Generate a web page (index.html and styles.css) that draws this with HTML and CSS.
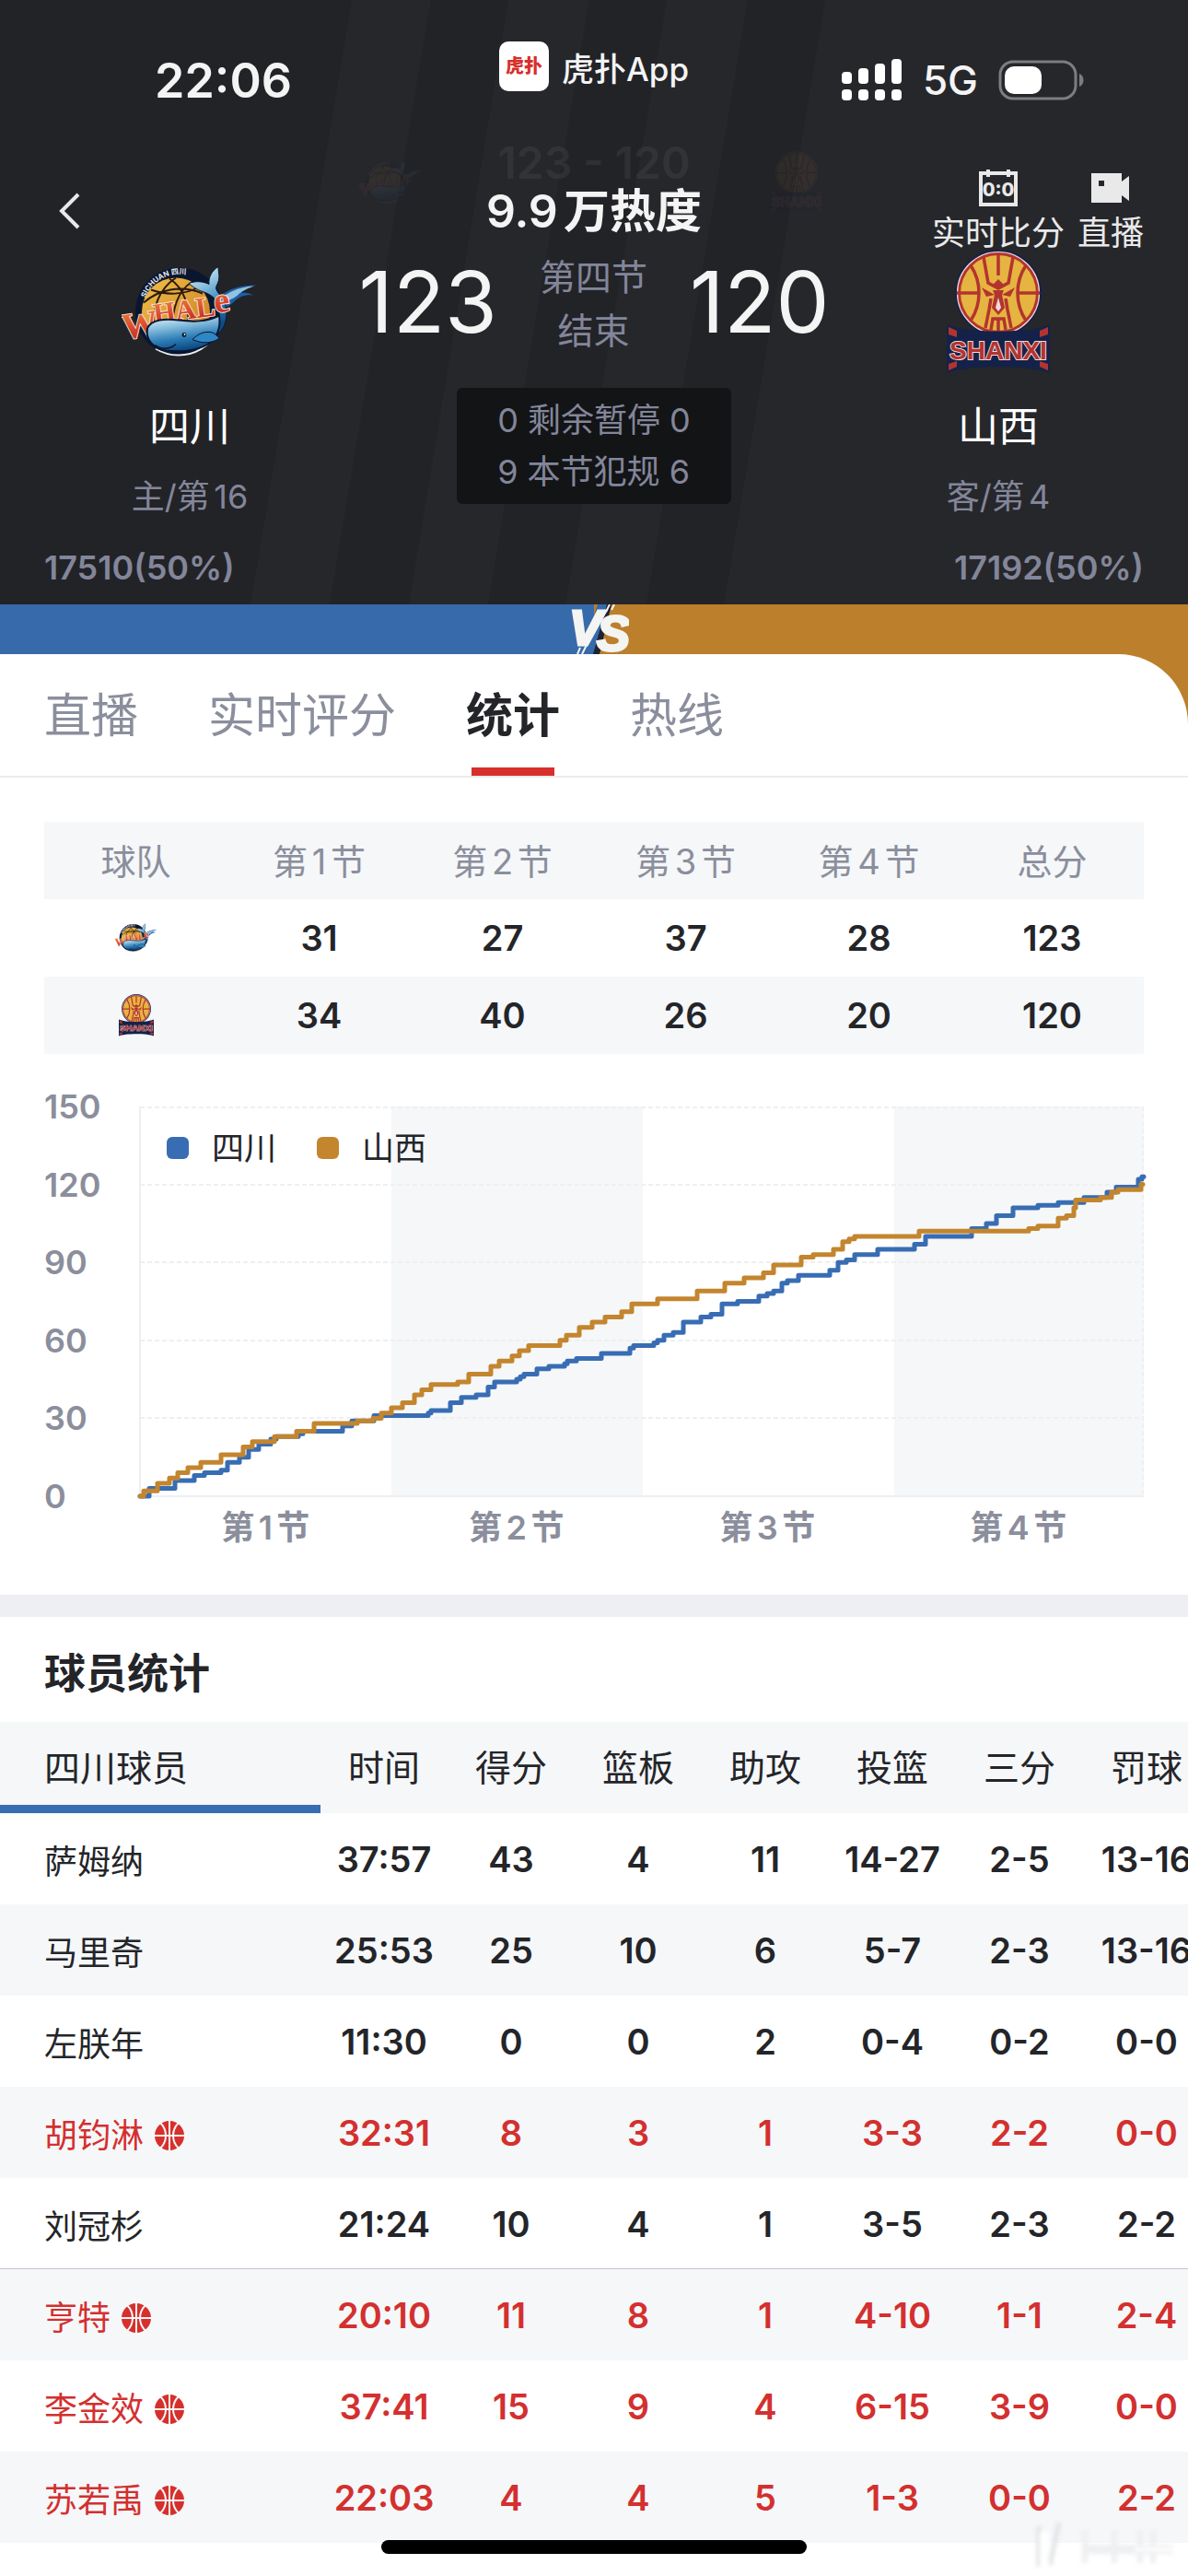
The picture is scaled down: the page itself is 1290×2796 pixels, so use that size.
FILE: index.html
```html
<!DOCTYPE html>
<html lang="zh-CN">
<head>
    <meta charset="UTF-8">
    <meta name="viewport" content="width=device-width, initial-scale=1.0">
    <title>四川 123 - 120 山西</title>
    <link rel="stylesheet" href="styles.css">
</head>
<body>
    <!-- shared icons -->
    <svg class="defs" aria-hidden="true">
        <defs>
            <linearGradient id="whaleBody" x1="0" y1="0" x2="0.3" y2="1">
                <stop offset="0" stop-color="#f2f8fb"/>
                <stop offset="0.35" stop-color="#8fc3e0"/>
                <stop offset="0.7" stop-color="#2f7fb8"/>
                <stop offset="1" stop-color="#0d4c86"/>
            </linearGradient>
            <linearGradient id="whaleWord" x1="0" y1="0" x2="0" y2="1">
                <stop offset="0" stop-color="#f08a3c"/>
                <stop offset="0.6" stop-color="#d8432a"/>
                <stop offset="1" stop-color="#b3241f"/>
            </linearGradient>
            <linearGradient id="goldBall" x1="0" y1="0" x2="1" y2="1">
                <stop offset="0" stop-color="#f0c04a"/>
                <stop offset="1" stop-color="#c87a1c"/>
            </linearGradient>
        </defs>
        <symbol id="logo-sichuan" viewBox="10 9 148 98">
            <path d="M110 47c10-10 22-18 47-18-10 2-14 5-17 8 6 0 10 1 13 3-10-1-16 2-22 8-6 5-12 7-20 7z" fill="#1d5ea6"/>
            <path d="M118 43c8-6 18-12 36-13-9 3-14 6-18 10-5 4-10 6-16 7z" fill="#8fc3e0"/>
            <circle cx="73" cy="58" r="48" fill="#0a1630"/>
            <path d="M47 98a48 48 0 0 0 73-42" fill="none" stroke="#e8ecef" stroke-width="2"/>
            <path id="ringText" d="M36 43A40 40 0 0 1 100 27" fill="none"/>
            <text class="ring-text"><textPath href="#ringText">SICHUAN 四川</textPath></text>
            <circle cx="69" cy="58" r="37" fill="url(#goldBall)"/>
            <path d="M34 48c16-14 40-20 64-10M69 21c-18 12-26 32-24 58M62 22c16 10 22 30 20 50M86 26c-14 8-22 30-20 50M42 34c16 6 36 6 52-3" fill="none" stroke="#2a1a10" stroke-width="2"/>
            <path d="M115 65c4-14-2-24-17-29-6-2-12-6-15-9 8-3 16-2 22 1-1-7 3-15 10-19 0 8 3 12-2 21-3 7 12 12 11 32-1 12-6 18-12 22z" fill="url(#whaleBody)" stroke="#0a1630" stroke-width="1"/>
            <g class="whale-word">
                <text class="whale-w" transform="rotate(-8 12 88)" x="12" y="88">W</text>
                <text transform="rotate(-8 45 71)" x="46" y="71">HAL</text>
                <text class="whale-e" transform="rotate(-8 112 60)" x="112" y="59">e</text>
            </g>
            <path d="M38 76c4-10 20-11 34-9 16 2 30 2 44-5 2 12-2 25-12 31-12 7-30 9-46 7-14-2-22-12-20-24z" fill="url(#whaleBody)" stroke="#0a1630" stroke-width="2"/>
            <path d="M87 88c6-6 12-9 20-8 4 1 7 4 9 7-8 5-18 6-29 1z" fill="#2f86c4" stroke="#0a1630" stroke-width="1"/>
            <path d="M46 94c6 4 12 5 19 2l4-3" fill="none" stroke="#0a1630" stroke-width="1.5"/>
            <circle cx="78" cy="83" r="2.4" fill="#0a1630"/>
            <circle cx="78.5" cy="82.5" r="0.9" fill="#fff"/>
        </symbol>
        <symbol id="logo-shanxi" viewBox="0 0 112 133">
            <circle cx="56" cy="46" r="47" fill="#14224a"/>
            <circle cx="56" cy="46" r="44.5" fill="#b23430" stroke="#f3d9d6" stroke-width="1.2"/>
            <circle cx="56" cy="46" r="41" fill="#e6b440"/>
            <g fill="none" stroke="#b23430" stroke-width="3.5">
                <path d="M11 46h23M78 46h23M26 16c12 18 12 42 0 60M86 16c-12 18-12 42 0 60"/>
                <path d="M40 7l5 28 11 6 11-6 5-28M56 5v22M48 86l2-12h12l2 12M56 74v16"/>
                <path d="M48 52l-2 12-4 20M64 52l2 12 4 20"/>
            </g>
            <path d="M38 40l14 8-9 2zM74 40l-14 8 9 2zM50 43h12l-2 5 3 14-7 8-7-8 3-14zM56 31l6 6-6 4-6-4z" fill="#b23430"/>
            <path d="M56 51l3 11-3 4-3-4z" fill="#f3d9d6"/>
            <path d="M0 80c18 10 94 10 112 0v53c-20-9-92-9-112 0z" fill="#14224a"/>
            <path d="M2 83l9 4v7l-9-3zM110 83l-9 4v7l9-3zM2 130l9-4v-6l-9 3zM110 130l-9-4v-6l9 3z" fill="#b23430"/>
            <text class="shanxi-word" x="56" y="118">SHANXI</text>
        </symbol>
        <symbol id="icon-ball" viewBox="0 0 32 32">
            <circle cx="16" cy="16" r="16" fill="#d7302c"/>
            <path d="M16 0v32M0 16h32M6 2c8 8 8 20 0 28M26 2c-8 8-8 20 0 28" fill="none" stroke="#f5f7f9" stroke-width="2"/>
        </symbol>
    </svg>

    <div class="app">
        <header class="header">
            <svg class="header-stripes" viewBox="0 0 1290 656" preserveAspectRatio="none" aria-hidden="true">
                <path d="M382 0h86L358 656h-86zM552 0h88L530 656h-86zM724 0h88L702 656h-88zM896 0h394v656H786z" fill="#26272b"/>
            </svg>

            <div class="mini-bar" aria-hidden="true">
                <svg class="mini-logo" viewBox="0 0 148 98"><use href="#logo-sichuan"/></svg>
                <span class="mini-score">123 - 120</span>
                <svg class="mini-logo" viewBox="0 0 112 133"><use href="#logo-shanxi"/></svg>
            </div>

            <div class="status-bar">
                <span class="clock">22:06</span>
                <span class="app-badge">
                    <span class="app-icon">虎扑</span>
                    <span>虎扑App</span>
                </span>
                <span class="status-icons">
                    <svg width="66" height="46" viewBox="0 0 66 46" fill="#fff">
                        <rect x="0" y="14" width="11" height="13" rx="4"/>
                        <rect x="18" y="10" width="11" height="17" rx="4"/>
                        <rect x="36" y="5" width="11" height="22" rx="4"/>
                        <rect x="54" y="0" width="11" height="27" rx="4"/>
                        <rect x="0" y="33" width="11" height="12" rx="4"/>
                        <rect x="18" y="33" width="11" height="12" rx="4"/>
                        <rect x="36" y="33" width="11" height="12" rx="4"/>
                        <rect x="54" y="33" width="11" height="12" rx="4"/>
                    </svg>
                    <span class="network">5G</span>
                    <svg width="94" height="44" viewBox="0 0 94 44">
                        <rect x="2" y="2" width="82" height="40" rx="14" fill="none" stroke="#7c7d80" stroke-width="3"/>
                        <rect x="7" y="7" width="40" height="30" rx="10" fill="#fff"/>
                        <path d="M88 15c6 2 6 12 0 14z" fill="#7c7d80"/>
                    </svg>
                </span>
            </div>

            <nav class="nav">
                <button class="back" aria-label="返回">
                    <svg width="24" height="40" viewBox="0 0 24 40"><path d="M21 2L3 20l18 18" fill="none" stroke="#e9e9ea" stroke-width="4"/></svg>
                </button>
                <h1 class="title">9.9万热度</h1>
                <div class="actions">
                    <button class="action">
                        <svg width="42" height="40" viewBox="0 0 42 40">
                            <path d="M2 4h38v34H2zM10 0v8M32 0v8" fill="none" stroke="#e9e9ea" stroke-width="4"/>
                            <text class="zero-text" x="21" y="29">0:0</text>
                        </svg>
                        实时比分
                    </button>
                    <button class="action">
                        <svg width="42" height="40" viewBox="0 0 42 40">
                            <path d="M0 4h33v9l8-6v27l-8-6v8H0zM8 12v6h6v-6z" fill="#e9e9ea" fill-rule="evenodd"/>
                        </svg>
                        直播
                    </button>
                </div>
            </nav>

            <section class="scoreboard">
                <div class="team">
                    <svg class="team-logo" width="148" height="98"><use href="#logo-sichuan"/></svg>
                    <span class="team-name">四川</span>
                    <span class="team-rank">主/第16</span>
                </div>
                <div class="middle">
                    <div class="score-line">
                        <span class="score">123</span>
                        <span class="period">第四节<br>结束</span>
                        <span class="score">120</span>
                    </div>
                    <div class="fouls">
                        <div>0 剩余暂停 0</div>
                        <div>9 本节犯规 6</div>
                    </div>
                </div>
                <div class="team">
                    <svg class="team-logo" width="112" height="133"><use href="#logo-shanxi"/></svg>
                    <span class="team-name">山西</span>
                    <span class="team-rank">客/第4</span>
                </div>
            </section>

            <div class="votes">
                <span>17510(50%)</span>
                <span>17192(50%)</span>
            </div>
        </header>

        <div class="vs-bar">
            <svg class="vs" width="68" height="54" viewBox="0 0 68 54">
                <path d="M34 0h12L32 54H16z" fill="#376aaa"/>
                <path d="M44 0h5L36 54h-7z" fill="#1d2330"/>
                <text class="vs-text" x="3" y="44">V</text>
                <text class="vs-text" x="33" y="50">S</text>
                <path d="M47 0l-4 8M52 0l-3 6M12 54l3-7M17 54l8-16" fill="none" stroke="#f4f4f2" stroke-width="2"/>
            </svg>
        </div>

        <div class="tabs-wrap">
            <nav class="tabs">
                <a class="tab" href="#live">直播</a>
                <a class="tab" href="#rating">实时评分</a>
                <a class="tab active" href="#stats">统计</a>
                <a class="tab" href="#hotline">热线</a>
            </nav>
        </div>

        <main class="content" id="stats">
            <table class="quarters">
                <thead>
                    <tr><th>球队</th><th>第1节</th><th>第2节</th><th>第3节</th><th>第4节</th><th>总分</th></tr>
                </thead>
                <tbody>
                    <tr>
                        <td><svg class="row-logo" width="46" height="32" role="img" aria-label="四川"><use href="#logo-sichuan"/></svg></td>
                        <td>31</td><td>27</td><td>37</td><td>28</td><td>123</td>
                    </tr>
                    <tr>
                        <td><svg class="row-logo" width="38" height="46" role="img" aria-label="山西"><use href="#logo-shanxi"/></svg></td>
                        <td>34</td><td>40</td><td>26</td><td>20</td><td>120</td>
                    </tr>
                </tbody>
            </table>

            <section class="chart">
                <div class="y-axis">
                    <span>150</span><span>120</span><span>90</span><span>60</span><span>30</span><span>0</span>
                </div>
                <div class="plot">
                    <svg class="plot-svg" viewBox="0 0 1090 423" preserveAspectRatio="none">
                        <path d="M273 0h273v423H273zM819 0h271v423H819z" fill="#f5f7f9"/>
                        <path d="M0 1h1090M0 85h1090M0 169h1090M0 254h1090M0 338h1090M1089 0v423" fill="none" stroke="#eeeff1" stroke-width="2" stroke-dasharray="5 3"/>
                        <path d="M0 0v423h1090" fill="none" stroke="#eeeff1" stroke-width="2"/>
                        <path class="line line-home" id="homeLine"/>
                        <path class="line line-away" id="awayLine"/>
                    </svg>
                    <div class="legend">
                        <span class="key home">四川</span>
                        <span class="key away">山西</span>
                    </div>
                </div>
                <div class="x-axis">
                    <span>第1节</span><span>第2节</span><span>第3节</span><span>第4节</span>
                </div>
            </section>

            <section class="players">
                <h2 class="players-title">球员统计</h2>
                <div class="players-scroll">
                    <table class="players-table">
                        <thead>
                            <tr><th class="name">四川球员</th><th>时间</th><th>得分</th><th>篮板</th><th>助攻</th><th>投篮</th><th>三分</th><th>罚球</th></tr>
                        </thead>
                        <tbody>
                            <tr><td class="name">萨姆纳</td><td>37:57</td><td>43</td><td>4</td><td>11</td><td>14-27</td><td>2-5</td><td>13-16</td></tr>
                            <tr><td class="name">马里奇</td><td>25:53</td><td>25</td><td>10</td><td>6</td><td>5-7</td><td>2-3</td><td>13-16</td></tr>
                            <tr><td class="name">左朕年</td><td>11:30</td><td>0</td><td>0</td><td>2</td><td>0-4</td><td>0-2</td><td>0-0</td></tr>
                            <tr class="on-court"><td class="name">胡钧淋<svg class="ball"><use href="#icon-ball"/></svg></td><td>32:31</td><td>8</td><td>3</td><td>1</td><td>3-3</td><td>2-2</td><td>0-0</td></tr>
                            <tr class="last-starter"><td class="name">刘冠杉</td><td>21:24</td><td>10</td><td>4</td><td>1</td><td>3-5</td><td>2-3</td><td>2-2</td></tr>
                            <tr class="on-court"><td class="name">亨特<svg class="ball"><use href="#icon-ball"/></svg></td><td>20:10</td><td>11</td><td>8</td><td>1</td><td>4-10</td><td>1-1</td><td>2-4</td></tr>
                            <tr class="on-court"><td class="name">李金效<svg class="ball"><use href="#icon-ball"/></svg></td><td>37:41</td><td>15</td><td>9</td><td>4</td><td>6-15</td><td>3-9</td><td>0-0</td></tr>
                            <tr class="on-court"><td class="name">苏若禹<svg class="ball"><use href="#icon-ball"/></svg></td><td>22:03</td><td>4</td><td>4</td><td>5</td><td>1-3</td><td>0-0</td><td>2-2</td></tr>
                        </tbody>
                    </table>
                </div>
            </section>
        </main>

        <svg class="corner-mark" viewBox="0 0 160 50" aria-hidden="true">
            <path d="M8 4v44M30 0L20 46" stroke="#e2e3e6" stroke-width="5"/>
            <path d="M14 10v38" stroke="#fff" stroke-width="10"/>
            <path d="M58 8v36M90 8v36M118 8v36M132 8v36" stroke="#eeeff1" stroke-width="6" fill="none"/>
            <path d="M60 29h94" stroke="#eeeff1" stroke-width="10"/>
            <path d="M112 29h42" stroke="#fff" stroke-width="4"/>
        </svg>
        <div class="home-indicator"></div>
    </div>

    <script>
        // [x, score] after every basket, x runs from 0 to 1090 over the four quarters
        const home = [
            [0, 0], [10, 3], [38, 6], [59, 8], [70, 9], [88, 10], [95, 13], [108, 15], [118, 18], [129, 20],
            [142, 22], [148, 23], [172, 24], [177, 25], [220, 27], [230, 29], [254, 31],
            [313, 32], [316, 33], [337, 36], [349, 38], [365, 39], [378, 42], [385, 44], [409, 45], [413, 46],
            [417, 47], [431, 49], [444, 50], [461, 51], [464, 52], [474, 53], [501, 55], [532, 57], [536, 58],
            [558, 59], [562, 60], [569, 62], [579, 63], [590, 67], [609, 69], [620, 70], [632, 74], [649, 75],
            [672, 77], [681, 78], [688, 79], [697, 82], [703, 83], [715, 85], [749, 87], [758, 90], [767, 91],
            [776, 93], [801, 95],
            [841, 97], [853, 100], [903, 103], [919, 105], [930, 108], [948, 111], [975, 112], [997, 113],
            [1025, 115], [1050, 117], [1060, 119], [1084, 122], [1088, 123]
        ];
        const away = [
            [0, 0], [4, 2], [19, 5], [32, 7], [41, 9], [52, 11], [66, 13], [88, 16], [112, 19], [122, 21],
            [146, 23], [170, 25], [189, 28], [236, 29], [253, 30], [262, 32], [273, 34],
            [285, 36], [298, 39], [306, 41], [316, 43], [345, 44], [357, 47], [381, 50], [390, 52], [404, 54],
            [412, 56], [422, 58], [456, 60], [463, 62], [477, 65], [491, 67], [505, 69], [523, 71], [534, 74],
            [562, 76], [605, 79], [635, 82], [656, 84], [677, 86], [688, 89], [718, 92], [731, 93], [753, 95],
            [763, 98], [770, 99], [776, 100],
            [846, 102], [965, 103], [975, 104], [997, 107], [1006, 108], [1014, 111], [1016, 114], [1043, 115],
            [1055, 117], [1062, 118], [1087, 120]
        ];

        // step line: go across first, then up
        function stepPath(points) {
            let d = "M0 423";
            points.forEach(([x, score]) => {
                d += `H${x}V${423 - score * 2.82}`;
            });
            return d + "h2";
        }

        document.getElementById("homeLine").setAttribute("d", stepPath(home));
        document.getElementById("awayLine").setAttribute("d", stepPath(away));
    </script>
</body>
</html>
```
FILE: styles.css
```css
* {
    box-sizing: border-box;
}

body {
    margin: 0;
    font-family: Inter, "Noto Sans CJK SC", sans-serif;
    font-size: 36px;
    color: #242529;
    background: #fff;
    text-autospace: normal;
}

h1, h2 {
    margin: 0;
}

button {
    padding: 0;
    border: 0;
    background: none;
    color: inherit;
    font: inherit;
}

.defs {
    position: absolute;
    width: 0;
    height: 0;
}

.app {
    position: relative;
    height: 100vh;
    overflow: hidden;
}

/* text inside the logos */
.ring-text {
    fill: #e8ecef;
    font-size: 8px;
    font-weight: 700;
}

.whale-word {
    fill: url(#whaleWord);
    stroke: #f6e3dc;
    stroke-width: 2px;
    paint-order: stroke;
    font-family: "Liberation Serif", serif;
    font-size: 31px;
    font-weight: 700;
}

.whale-w {
    font-size: 40px;
}

.whale-e {
    font-size: 38px;
}

.shanxi-word {
    fill: #b23430;
    stroke: #f3d9d6;
    stroke-width: 2px;
    paint-order: stroke;
    font-family: "Liberation Sans Narrow", "Liberation Sans", sans-serif;
    font-size: 28px;
    font-weight: 700;
    text-anchor: middle;
}

/* header */
.header {
    position: relative;
    background: #222327;
    color: #f4f4f5;
}

.header > * {
    position: relative;
}

.header > .header-stripes {
    position: absolute;
    top: 0;
    left: 0;
    width: 100%;
    height: 100%;
}

.header > .mini-bar {
    position: absolute;
    top: 164px;
    left: 0;
    right: 0;
    display: flex;
    justify-content: center;
    align-items: center;
    gap: 80px;
    opacity: 0.06;
}

.mini-logo {
    width: 70px;
    height: 68px;
}

.mini-score {
    margin-top: -44px;
    font-size: 48px;
    font-weight: 600;
}

.status-bar {
    display: grid;
    grid-template-columns: 1fr auto 1fr;
    align-items: center;
    height: 174px;
    padding: 0 112px;
}

.clock {
    padding-left: 56px;
    font-size: 52px;
    font-weight: 600;
}

.app-badge {
    display: flex;
    align-items: center;
    gap: 14px;
    padding-bottom: 30px;
    font-size: 35px;
    font-weight: 500;
    text-autospace: no-autospace;
}

.app-icon {
    width: 54px;
    height: 54px;
    border-radius: 10px;
    background: #fff;
    color: #d7302c;
    font-size: 20px;
    font-weight: 900;
    line-height: 54px;
    text-align: center;
}

.status-icons {
    display: flex;
    justify-content: flex-end;
    align-items: center;
    gap: 22px;
}

.network {
    font-size: 44px;
    font-weight: 500;
}

.nav {
    display: grid;
    grid-template-columns: 1fr auto 1fr;
    align-items: center;
    height: 98px;
    padding: 10px 48px 0;
}

.back {
    display: flex;
    justify-self: start;
    padding-left: 16px;
}

.title {
    font-size: 50px;
    font-weight: 600;
    line-height: 60px;
}

.actions {
    display: flex;
    justify-content: flex-end;
    gap: 14px;
}

.action {
    display: flex;
    flex-direction: column;
    align-items: center;
    gap: 9px;
    color: #e9e9ea;
    font-size: 36px;
    line-height: 40px;
}

.zero-text {
    fill: #e9e9ea;
    font-size: 20px;
    font-weight: 800;
    text-anchor: middle;
}

.scoreboard {
    display: flex;
    padding: 0 48px;
}

.team {
    display: flex;
    flex-direction: column;
    align-items: center;
    width: 316px;
}

.team-logo {
    height: 133px;
}

.team-name {
    margin-top: 28px;
    font-size: 44px;
    line-height: 60px;
    color: #fff;
}

.team-rank {
    margin-top: 22px;
    line-height: 48px;
    color: #83869a;
}

.middle {
    flex: 1;
    display: flex;
    flex-direction: column;
    align-items: center;
}

.score-line {
    display: flex;
    align-items: flex-start;
    gap: 46px;
    height: 118px;
}

.score {
    font-size: 92px;
    line-height: 112px;
}

.period {
    font-size: 39px;
    line-height: 58px;
    text-align: center;
    color: #83869a;
}

.fouls {
    margin-top: 31px;
    padding: 7px 44px;
    border-radius: 6px;
    background: #131416;
    line-height: 56px;
    color: #83869a;
}

.votes {
    display: flex;
    justify-content: space-between;
    margin-top: 29px;
    padding: 0 48px 16px;
    line-height: 48px;
    font-weight: 600;
    color: #83869a;
}

.vs-bar {
    display: flex;
    justify-content: center;
    height: 54px;
    background: linear-gradient(90deg, #376aaa 50%, #bc7f2b 50%);
}

.vs {
    margin-left: 8px;
}

.vs-text {
    fill: #f4f4f2;
    stroke: #f4f4f2;
    stroke-width: 3px;
    font-family: "Liberation Sans Narrow", "Liberation Sans", sans-serif;
    font-size: 54px;
    font-weight: 700;
    font-style: italic;
}

/* tabs */
.tabs-wrap {
    background: #bc7f2b;
}

.tabs {
    display: flex;
    gap: 76px;
    height: 134px;
    padding: 0 48px;
    border-bottom: 2px solid #ebebed;
    border-top-right-radius: 76px;
    background: #fff;
}

.tab {
    position: relative;
    font-size: 51px;
    line-height: 134px;
    color: #8b8e9c;
    text-decoration: none;
}

.tab.active {
    font-weight: 700;
    color: #242529;
}

.tab.active::after {
    content: "";
    position: absolute;
    bottom: 0;
    left: 6px;
    right: 6px;
    height: 9px;
    background: #d7302c;
}

/* quarter scores */
.quarters {
    width: calc(100% - 96px);
    margin: 48px 48px 0;
    border-collapse: collapse;
    table-layout: fixed;
    text-align: center;
}

.quarters th,
.quarters td {
    height: 84px;
    padding: 0;
    font-size: 38px;
}

.quarters th {
    padding-bottom: 4px;
    font-weight: 400;
    color: #8b8e9c;
}

.quarters td {
    font-weight: 600;
}

.quarters thead tr,
.quarters tbody tr:nth-child(even) {
    background: #f5f7f9;
}

.row-logo {
    display: block;
    margin: 0 auto;
}

/* score chart */
.chart {
    display: grid;
    grid-template-columns: 104px 1fr;
    padding: 57px 48px 48px;
}

.y-axis {
    display: flex;
    flex-direction: column;
    justify-content: space-between;
    height: 463px;
    margin: -20px 0;
    line-height: 40px;
    font-weight: 600;
    color: #8b8e9c;
}

.plot {
    position: relative;
    height: 423px;
}

.plot-svg {
    display: block;
    width: 100%;
    height: 100%;
    overflow: visible;
}

.line {
    fill: none;
    stroke-width: 5;
    stroke-linecap: round;
    stroke-linejoin: round;
}

.line-home {
    stroke: #386db3;
}

.line-away {
    stroke: #c3852e;
}

.legend {
    position: absolute;
    top: 20px;
    left: 29px;
    display: flex;
    gap: 44px;
    line-height: 50px;
    font-size: 35px;
}

.key {
    display: flex;
    align-items: center;
    gap: 25px;
}

.key::before {
    content: "";
    width: 24px;
    height: 24px;
    border-radius: 6px;
}

.key.home::before {
    background: #386db3;
}

.key.away::before {
    background: #c3852e;
}

.x-axis {
    grid-column: 2;
    display: grid;
    grid-template-columns: repeat(4, 1fr);
    margin-top: 9px;
    line-height: 50px;
    text-align: center;
    font-weight: 600;
    color: #8b8e9c;
}

/* players */
.players {
    border-top: 24px solid #eeeff2;
}

.players-title {
    padding: 32px 48px 22px;
    font-size: 45px;
    line-height: 60px;
    font-weight: 700;
}

.players-scroll {
    overflow: hidden;
}

.players-table {
    width: calc(100% + 24px);
    min-width: 1310px;
    border-collapse: collapse;
    table-layout: fixed;
    text-align: center;
}

.players-table th,
.players-table td {
    height: 99px;
    padding: 0;
    font-size: 38px;
    font-weight: 600;
}

.players-table th {
    padding-bottom: 6px;
    font-size: 39px;
    font-weight: 400;
}

.players-table .name {
    width: 348px;
    padding-left: 48px;
    font-weight: 400;
    text-align: left;
}

.players-table td.name {
    font-size: 36px;
}

.players-table thead tr,
.players-table tbody tr:nth-child(even) {
    background: #f5f7f9;
}

.players-table th.name {
    box-shadow: inset 0 -9px #386db3;
}

.last-starter {
    box-shadow: inset 0 -1px #c4c6cc;
}

.on-court {
    color: #d3302f;
}

.ball {
    width: 32px;
    height: 32px;
    margin-left: 12px;
    vertical-align: -3px;
}

/* over the page */
.corner-mark {
    position: absolute;
    right: 10px;
    bottom: 8px;
    width: 160px;
    filter: blur(2px);
}

.home-indicator {
    position: absolute;
    bottom: 24px;
    left: 50%;
    width: 462px;
    height: 15px;
    margin-left: -231px;
    border-radius: 8px;
    background: #000;
}
```
